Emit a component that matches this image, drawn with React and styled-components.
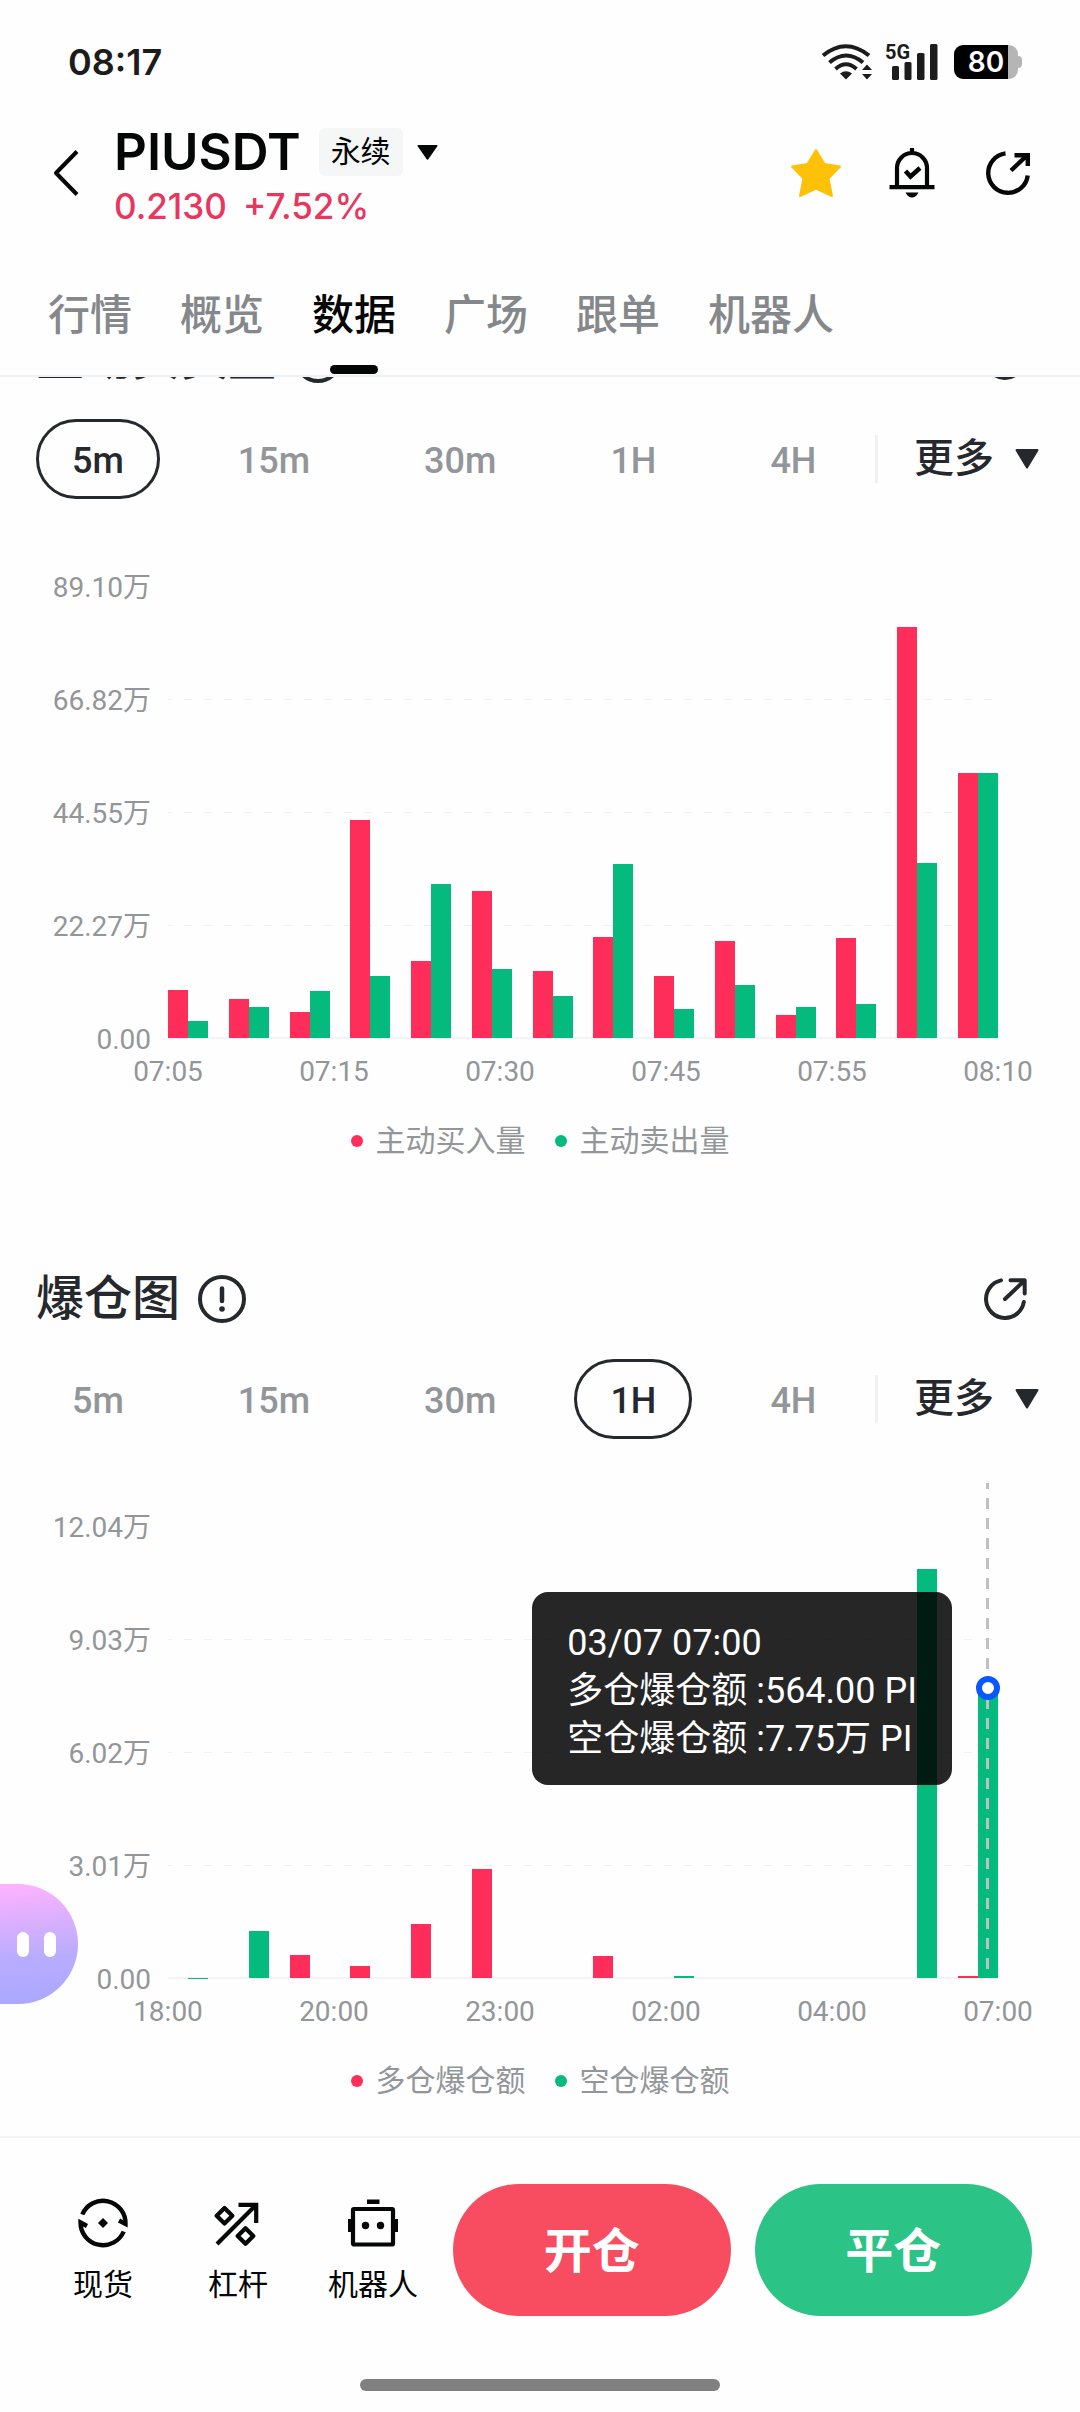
import { useState } from 'react'
import styled, { createGlobalStyle } from 'styled-components'

const RED = '#ff2d5a'
const GREEN = '#04ba7c'
const INK = '#25282c'
const MUTED = '#939699'

const GlobalStyle = createGlobalStyle`
    * {
        box-sizing: border-box;
    }
    body {
        margin: 0;
        background: #fefefe;
        font-family: Roboto, 'Noto Sans CJK SC', sans-serif;
        color: #050606;
    }
    button {
        display: flex;
        align-items: center;
        padding: 0;
        border: 0;
        background: none;
        color: inherit;
        font: inherit;
        white-space: nowrap;
        cursor: pointer;
    }
    svg {
        display: block;
        flex: none;
        overflow: visible;
    }
`

const Page = styled.div`
    display: flex;
    flex-direction: column;
    height: 100vh;
`

/* ---------- header ---------- */

const Header = styled.header`
    border-bottom: 2px solid #f0f1f2;
`

const StatusBar = styled.div`
    display: flex;
    align-items: center;
    justify-content: space-between;
    height: 112px;
    padding: 12px 58px 0 68px;
`

const Clock = styled.time`
    font-family: Inter, sans-serif;
    font-size: 36px;
    font-weight: 600;
    color: #1c1c1c;
`

const StatusIcons = styled.div`
    display: flex;
    align-items: center;
    gap: 14px;
`

const Battery = styled.div`
    display: flex;
    align-items: center;
    margin-left: 2px;

    &::after {
        content: '';
        width: 4px;
        height: 12px;
        border-radius: 0 4px 4px 0;
        background: #b5b5b5;
    }
`

const BatteryLevel = styled.span`
    width: 64px;
    height: 34px;
    border-radius: 9px;
    background: linear-gradient(90deg, #000 84%, #b5b5b5 84%);
    color: #fff;
    font-family: Inter, sans-serif;
    font-size: 28px;
    font-weight: 600;
    line-height: 34px;
    text-align: center;
`

const Toolbar = styled.div`
    display: flex;
    align-items: center;
    height: 122px;
    padding: 0 48px 0 52px;
`

const Symbol = styled.div`
    flex: 1;
    padding: 10px 0 0 35px;
`

const SymbolButton = styled.button`
    height: 56px;
`

const SymbolName = styled.h1`
    margin: 0 18px 0 0;
    font-family: Inter, sans-serif;
    font-size: 51px;
    font-weight: 600;
    line-height: 56px;
`

const Badge = styled.span`
    height: 48px;
    margin-right: 14px;
    padding: 0 12px;
    border-radius: 6px;
    background: #f5f6f6;
    font-size: 30px;
    line-height: 48px;
`

const Price = styled.div`
    display: flex;
    gap: 16px;
    font-family: Inter, sans-serif;
    font-size: 35px;
    font-weight: 500;
    line-height: 52px;
    color: #e8365f;
`

const Actions = styled.div`
    display: flex;
    align-items: center;
    gap: 48px;
`

const Tabs = styled.nav`
    display: flex;
    gap: 48px;
    padding: 52px 48px 1px;
`

const Tab = styled.a`
    display: flex;
    flex-direction: column;
    align-items: center;
    gap: 19px;
    color: ${({ $active }) => ($active ? '#050606' : '#85888b')};
    font-size: 42px;
    font-weight: 500;
    line-height: 60px;
    text-decoration: none;
    white-space: nowrap;

    &::after {
        content: '';
        width: 48px;
        height: 9px;
        border-radius: 5px;
        background: ${({ $active }) => ($active ? '#050606' : 'transparent')};
    }
`

/* ---------- chart panels ---------- */

const Main = styled.main`
    position: relative;
    flex: 1;
    min-height: 0;
    overflow: hidden;
`

/* the list is scrolled a little way under the header */
const Panels = styled.div`
    display: flex;
    flex-direction: column;
    gap: 108px;
    margin-top: -48px;
`

const Panel = styled.section`
    padding: 0 36px;
    color: ${INK};
`

const PanelHead = styled.div`
    display: flex;
    align-items: center;
    gap: 18px;
    height: 60px;
    padding-right: 15px;
`

const PanelTitle = styled.h2`
    margin: 0;
    font-size: 48px;
    font-weight: 500;
    line-height: 56px;
`

const ShareButton = styled.button`
    margin-left: auto;
`

const Ranges = styled.div`
    display: flex;
    align-items: center;
    justify-content: space-between;
    margin-top: 30px;
    padding-right: 5px;
`

const RangeList = styled.div`
    display: flex;
    gap: 42px;
`

const RangeButton = styled.button`
    height: 80px;
    padding: 3px 33px 0;
    border: 3px solid ${({ $active }) => ($active ? INK : 'transparent')};
    border-radius: 40px;
    color: ${({ $active }) => ($active ? INK : MUTED)};
    font-size: 36px;
    font-weight: 500;
`

const MoreButton = styled.button`
    gap: 21px;
    height: 48px;
    padding-left: 36px;
    border-left: 3px solid #f0f1f3;
    font-size: 40px;
    font-weight: 500;
    line-height: 48px;
`

const Chart = styled.div`
    display: grid;
    grid-template-columns: 115px 1fr;
    column-gap: 17px;
    margin-top: 88px;
    padding-right: 46px;
    color: ${MUTED};
    font-size: 28px;
    line-height: 34px;
`

const YAxis = styled.div`
    display: flex;
    flex-direction: column;
    justify-content: space-between;
    margin: -16px 0 -18px;
    text-align: right;
`

const Plot = styled.div`
    position: relative;
    display: grid;
    height: 452px;
`

const GridLines = styled.div`
    grid-area: 1 / 1;
    display: flex;
    flex-direction: column;
`

const GridLine = styled.div`
    flex: 1;
    background: repeating-linear-gradient(90deg, #efefef 0 4px, transparent 4px 16px, #efefef 16px 20px)
        bottom / 100% 1px no-repeat;

    &:last-child {
        background: linear-gradient(#f3f3f3, #f3f3f3) bottom / 100% 2px no-repeat;
    }
`

const Bars = styled.div`
    grid-area: 1 / 1;
    display: flex;
    justify-content: space-between;
    padding-bottom: 1px;
`

const BarPair = styled.div`
    display: flex;
    align-items: flex-end;
`

const Bar = styled.div`
    width: 20px;
    background: ${({ $color }) => $color};
`

const XAxis = styled.div`
    grid-column: 2;
    display: flex;
    justify-content: space-between;
    margin: 16px -36px 0;
`

const XLabel = styled.span`
    width: 72px;
    text-align: center;
`

const Legend = styled.div`
    display: flex;
    justify-content: center;
    gap: 29px;
    margin-top: 32px;
    color: ${MUTED};
    font-size: 30px;
    line-height: 40px;
`

const LegendItem = styled.span`
    display: flex;
    align-items: center;
    gap: 13px;

    &::before {
        content: '';
        width: 12px;
        height: 12px;
        border-radius: 50%;
        background: ${({ $color }) => $color};
    }
`

const CursorLine = styled.div`
    position: absolute;
    top: -44px;
    right: 9px;
    bottom: 1px;
    width: 3px;
    background: repeating-linear-gradient(#bfbfc6 0 6px, transparent 6px 15px, #bfbfc6 15px 20px);
`

const CursorDot = styled.div`
    position: absolute;
    right: -2px;
    width: 24px;
    height: 24px;
    margin-bottom: -12px;
    border: 6px solid #0a56ff;
    border-radius: 50%;
    background: #fff;
`

const Tooltip = styled.div`
    position: absolute;
    top: 65px;
    right: 46px;
    padding: 27px 35px 22px;
    border-radius: 16px;
    background: rgba(0, 0, 0, 0.85);
    color: #fff;
    font-size: 36px;
    line-height: 48px;
    white-space: nowrap;
`

const Assistant = styled.button`
    position: absolute;
    left: 0;
    bottom: 132px;
    gap: 15px;
    width: 78px;
    height: 120px;
    padding-left: 17px;
    border-radius: 0 60px 60px 0;
    background: linear-gradient(175deg, #ffb3ff, #b9acff 60%, #a9a8ff);
`

const Eye = styled.span`
    width: 12px;
    height: 25px;
    border-radius: 6px;
    background: #fff;
`

/* ---------- footer ---------- */

const Footer = styled.footer`
    padding-bottom: 21px;
    border-top: 2px solid #f3f3f3;
`

const FooterRow = styled.div`
    display: flex;
    align-items: center;
    padding: 46px 48px 63px 58px;
`

const Shortcuts = styled.nav`
    display: flex;
    gap: 45px;
    margin-right: 35px;
`

const Shortcut = styled.a`
    display: flex;
    flex-direction: column;
    align-items: center;
    gap: 20px;
    width: 90px;
    color: #050606;
    font-size: 30px;
    line-height: 34px;
    text-decoration: none;
    white-space: nowrap;
`

const Trades = styled.div`
    display: flex;
    flex: 1;
    gap: 24px;
`

const TradeButton = styled.button`
    flex: 1;
    justify-content: center;
    height: 132px;
    padding-bottom: 6px;
    border-radius: 66px;
    background: ${({ $color }) => $color};
    color: #fff;
    font-size: 48px;
    font-weight: 700;
`

const HomeIndicator = styled.div`
    width: 360px;
    height: 12px;
    margin: 0 auto;
    border-radius: 6px;
    background: #808080;
`

/* ---------- icons ---------- */

const WifiIcon = () => (
    <svg width="50" height="36" viewBox="0 0 50 36" fill="none" stroke="#1c1c1c" strokeWidth="4">
        <path d="M1 11.5Q23.8 -7 47 11.5M7.5 18.5Q24 4.5 41 18.5M13.5 25Q24 15.5 34.500 25" />
        <path d="M18 29.5Q24 25 30 29.5L24 35.5Z" fill="#1c1c1c" stroke="none" />
        <path d="M40 26l5-5.5 5 5.5zM40 30h10l-5 5.5z" fill="#1c1c1c" stroke="none" />
    </svg>
)

const SignalIcon = () => (
    <svg width="52" height="38" viewBox="0 0 52 38" fill="#1c1c1c">
        <text x="-1" y="16" fontSize="20" fontWeight="700">
            5G
        </text>
        <rect x="6" y="23" width="7" height="14" rx="1.5" />
        <rect x="18.5" y="19" width="7" height="18" rx="1.5" />
        <rect x="31" y="10" width="7.5" height="27" rx="1.5" />
        <rect x="44" y="1" width="7.5" height="36" rx="1.5" />
    </svg>
)

const BackIcon = () => (
    <svg width="27" height="46" viewBox="0 0 27 46" fill="none" stroke="#050606" strokeWidth="4">
        <path d="M25 1.5L4 23l21 21.5" strokeLinejoin="round" />
    </svg>
)

const CaretIcon = ({ width, height, color }) => (
    <svg width={width} height={height} viewBox="0 0 22 18" preserveAspectRatio="none" fill={color}>
        <path d="M1.5 1h19L11 16.5z" stroke={color} strokeWidth="2" strokeLinejoin="round" />
    </svg>
)

const StarIcon = () => (
    <svg width="48" height="48" viewBox="1 0 48 48" fill="#ffc107" stroke="#ffc107" strokeWidth="2" strokeLinejoin="round">
        <path d="M25 1L33.5 15L49 17.5L37.5 29.5L41 47L25 39.5L9 47L12.5 29.5L1 17.5L16.5 15Z" />
    </svg>
)

const BellIcon = () => (
    <svg width="48" height="50" viewBox="0 0 48 50" fill="none" stroke="#050606" strokeWidth="4.2">
        <path d="M9 39V20a15 15 0 0 1 30 0V39M1.5 39.2H46.5M24 0V4" />
        <path d="M17.5 23L22.5 28.5L32 20" strokeWidth="4.5" />
        <path d="M17.5 44.5H30.5Q28 49.5 24 49.5T17.5 44.5Z" fill="#050606" stroke="none" />
    </svg>
)

const ShareIcon = ({ rounded }) =>
    rounded ? (
        <svg width="48" height="48" viewBox="0 0 48 48" fill="none" stroke={INK} strokeWidth="4" strokeLinecap="round" strokeLinejoin="round">
            <path d="M42.8 27A19 19 0 1 1 20 5.4M29.5 5.3H43.7V18.5M24 24L43 6" />
        </svg>
    ) : (
        <svg width="48" height="48" viewBox="0 0 48 48" fill="none" stroke="#050606" strokeWidth="4.4">
            <path d="M43.7 26.4A19.8 19.8 0 1 1 21.5 4.4M30.5 6.2H43.8V17M27 21.5L43 6.5" />
        </svg>
    )

const InfoIcon = () => (
    <svg width="48" height="48" viewBox="0 0 48 48" fill="none" stroke={INK} strokeWidth="4">
        <circle cx="24" cy="24" r="22" />
        <path d="M24 13.5V26" strokeWidth="4.5" strokeLinecap="round" />
        <circle cx="24" cy="34" r="2.8" fill={INK} stroke="none" />
    </svg>
)

const SpotIcon = () => (
    <svg width="50" height="50" viewBox="0 0 50 50" fill="none" stroke="#050606" strokeWidth="4.4">
        <path d="M4.3 16.5A22.5 22.5 0 0 1 47.5 26L41 22.5" />
        <path d="M45.7 33.5A22.5 22.5 0 0 1 2.5 24.5L9 28" />
        <path d="M25 20L30 25L25 30L20 25Z" fill="#050606" stroke="none" />
    </svg>
)

const LeverageIcon = () => (
    <svg width="50" height="50" viewBox="0 0 50 50" fill="none" stroke="#050606" strokeWidth="4.2">
        <path d="M4 46L43 7M25.5 6.8H43.2V25" />
        <path d="M11.5 10L19.3 17.8L11.5 25.6L3.7 17.8ZM32.5 30.2L40.3 38L32.5 45.8L24.7 38Z" strokeLinejoin="round" />
    </svg>
)

const RobotIcon = () => (
    <svg width="50" height="50" viewBox="0 0 50 50" fill="#050606">
        <rect x="5" y="11" width="40" height="35.5" rx="1" fill="none" stroke="#050606" strokeWidth="4.2" />
        <path d="M0 21H4V34H0ZM46 21H50V34H46ZM19 1.5H31.5V6H19Z" />
        <circle cx="17.5" cy="27.5" r="3.7" />
        <circle cx="32.5" cy="27.5" r="3.7" />
    </svg>
)

/* ---------- data, in units of 万 ---------- */

const ranges = ['5m', '15m', '30m', '1H', '4H']

const volumeChart = {
    max: 89.1,
    yLabels: ['89.10万', '66.82万', '44.55万', '22.27万', '0.00'],
    xLabels: ['07:05', '07:15', '07:30', '07:45', '07:55', '08:10'],
    legend: ['主动买入量', '主动卖出量'],
    pairs: [
        [9.4, 3.3],
        [7.7, 6.1],
        [5.1, 9.3],
        [43.1, 12.3],
        [15.2, 30.5],
        [29.1, 13.6],
        [13.2, 8.3],
        [19.9, 34.3],
        [12.3, 5.7],
        [19.2, 10.4],
        [4.6, 6.1],
        [19.8, 6.7],
        [81.2, 34.5],
        [52.3, 52.4],
    ],
}

const liquidationChart = {
    max: 12.04,
    yLabels: ['12.04万', '9.03万', '6.02万', '3.01万', '0.00'],
    xLabels: ['18:00', '20:00', '23:00', '02:00', '04:00', '07:00'],
    legend: ['多仓爆仓额', '空仓爆仓额'],
    pairs: [
        [0, 0.01],
        [0, 1.25],
        [0.61, 0],
        [0.32, 0],
        [1.43, 0],
        [2.91, 0],
        [0, 0],
        [0.59, 0],
        [0, 0.05],
        [0, 0],
        [0, 0],
        [0, 0],
        [0, 10.92],
        [0.0564, 7.75],
    ],
    cursor: {
        value: 7.75,
        lines: ['03/07 07:00', '多仓爆仓额 :564.00 PI', '空仓爆仓额 :7.75万 PI'],
    },
}

function BarChart({ data }) {
    const percent = (value) => `${(value / data.max) * 100}%`

    return (
        <>
            <Chart>
                <YAxis>
                    {data.yLabels.map((label) => (
                        <span key={label}>{label}</span>
                    ))}
                </YAxis>
                <Plot>
                    <GridLines>
                        <GridLine />
                        <GridLine />
                        <GridLine />
                        <GridLine />
                    </GridLines>
                    <Bars>
                        {data.pairs.map(([first, second], index) => (
                            <BarPair key={index}>
                                <Bar $color={RED} style={{ height: percent(first) }} />
                                <Bar $color={GREEN} style={{ height: percent(second) }} />
                            </BarPair>
                        ))}
                    </Bars>
                    {data.cursor && (
                        <>
                            <CursorLine />
                            <CursorDot style={{ bottom: percent(data.cursor.value) }} />
                            <Tooltip role="tooltip">
                                {data.cursor.lines.map((line) => (
                                    <div key={line}>{line}</div>
                                ))}
                            </Tooltip>
                        </>
                    )}
                </Plot>
                <XAxis>
                    {data.xLabels.map((label) => (
                        <XLabel key={label}>{label}</XLabel>
                    ))}
                </XAxis>
            </Chart>
            <Legend>
                <LegendItem $color={RED}>{data.legend[0]}</LegendItem>
                <LegendItem $color={GREEN}>{data.legend[1]}</LegendItem>
            </Legend>
        </>
    )
}

function ChartPanel({ title, initialRange, data }) {
    const [range, setRange] = useState(initialRange)

    return (
        <Panel>
            <PanelHead>
                <PanelTitle>{title}</PanelTitle>
                <button type="button" aria-label="说明">
                    <InfoIcon />
                </button>
                <ShareButton type="button" aria-label="分享">
                    <ShareIcon rounded />
                </ShareButton>
            </PanelHead>
            <Ranges>
                <RangeList>
                    {ranges.map((item) => (
                        <RangeButton
                            key={item}
                            type="button"
                            $active={item === range}
                            aria-pressed={item === range}
                            onClick={() => setRange(item)}
                        >
                            {item}
                        </RangeButton>
                    ))}
                </RangeList>
                <MoreButton type="button" aria-haspopup="menu">
                    更多
                    <CaretIcon width={24} height={20} color={INK} />
                </MoreButton>
            </Ranges>
            <BarChart data={data} />
        </Panel>
    )
}

function App() {
    const tabs = ['行情', '概览', '数据', '广场', '跟单', '机器人']

    return (
        <Page>
            <GlobalStyle />
            <Header>
                <StatusBar>
                    <Clock>08:17</Clock>
                    <StatusIcons>
                        <WifiIcon />
                        <SignalIcon />
                        <Battery>
                            <BatteryLevel>80</BatteryLevel>
                        </Battery>
                    </StatusIcons>
                </StatusBar>
                <Toolbar>
                    <button type="button" aria-label="返回">
                        <BackIcon />
                    </button>
                    <Symbol>
                        <SymbolButton type="button" aria-haspopup="menu">
                            <SymbolName>PIUSDT</SymbolName>
                            <Badge>永续</Badge>
                            <CaretIcon width={21} height={15} color="#050606" />
                        </SymbolButton>
                        <Price>
                            <span>0.2130</span>
                            <span>+7.52%</span>
                        </Price>
                    </Symbol>
                    <Actions>
                        <button type="button" aria-label="收藏">
                            <StarIcon />
                        </button>
                        <button type="button" aria-label="提醒">
                            <BellIcon />
                        </button>
                        <button type="button" aria-label="分享">
                            <ShareIcon />
                        </button>
                    </Actions>
                </Toolbar>
                <Tabs>
                    {tabs.map((tab) => (
                        <Tab key={tab} href="#" $active={tab === '数据'}>
                            {tab}
                        </Tab>
                    ))}
                </Tabs>
            </Header>
            <Main>
                <Panels>
                    <ChartPanel title="主动买卖量" initialRange="5m" data={volumeChart} />
                    <ChartPanel title="爆仓图" initialRange="1H" data={liquidationChart} />
                </Panels>
                <Assistant type="button" aria-label="助手">
                    <Eye />
                    <Eye />
                </Assistant>
            </Main>
            <Footer>
                <FooterRow>
                    <Shortcuts>
                        <Shortcut href="#">
                            <SpotIcon />
                            现货
                        </Shortcut>
                        <Shortcut href="#">
                            <LeverageIcon />
                            杠杆
                        </Shortcut>
                        <Shortcut href="#">
                            <RobotIcon />
                            机器人
                        </Shortcut>
                    </Shortcuts>
                    <Trades>
                        <TradeButton type="button" $color="#f84c60">
                            开仓
                        </TradeButton>
                        <TradeButton type="button" $color="#2bc386">
                            平仓
                        </TradeButton>
                    </Trades>
                </FooterRow>
                <HomeIndicator />
            </Footer>
        </Page>
    )
}

export default App
